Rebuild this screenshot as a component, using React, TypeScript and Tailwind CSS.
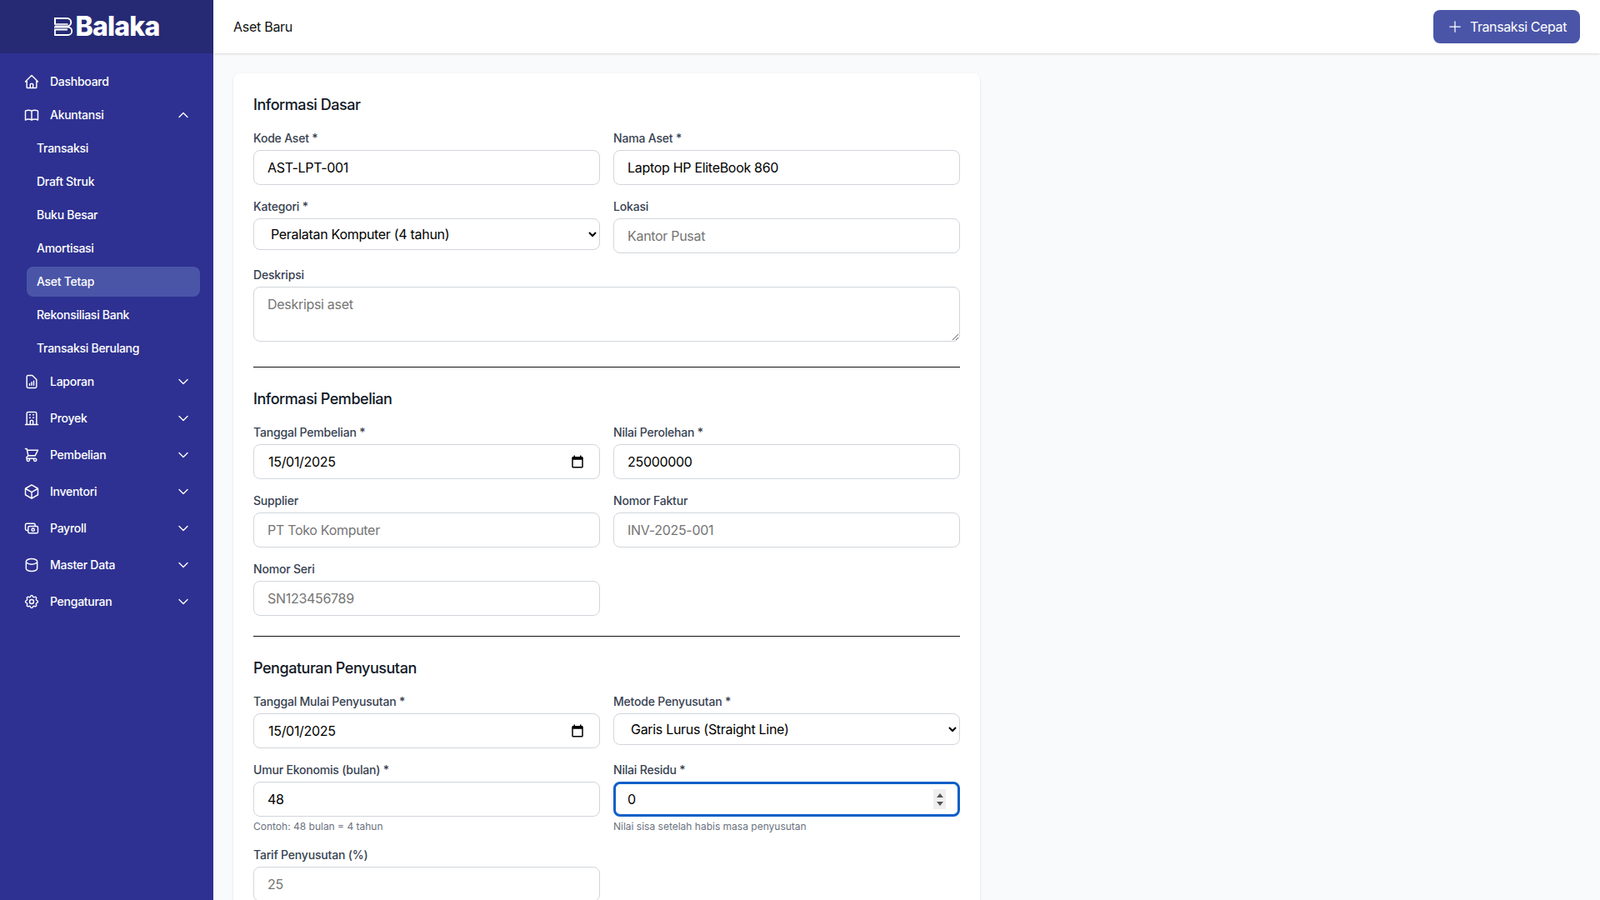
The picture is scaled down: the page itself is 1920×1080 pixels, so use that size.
import React from "react";
import { HiOutlineCube, HiOutlineChevronDown, HiOutlineChevronUp, HiOutlinePlus } from "react-icons/hi2";

type IconProps = { className?: string; strokeWidth?: number };

function Stroke({ d, className }: { d: string; className?: string }) {
  return (
    <svg className={className} viewBox="0 0 24 24" fill="none" stroke="currentColor" strokeWidth="1.75" strokeLinecap="round" strokeLinejoin="round">
      <path d={d} />
    </svg>
  );
}

const HomeIcon = (p: IconProps) => (
  <Stroke className={p.className} d="M3 12l2-2m0 0l7-7 7 7M5 10v10a1 1 0 001 1h3m10-11l2 2m-2-2v10a1 1 0 01-1 1h-3m-6 0a1 1 0 001-1v-4a1 1 0 011-1h2a1 1 0 011 1v4a1 1 0 001 1m-6 0h6" />
);
const BookIcon = (p: IconProps) => (
  <Stroke className={p.className} d="M12 6.253v13m0-13C10.832 5.477 9.246 5 7.5 5S4.168 5.477 3 6.253v13C4.168 18.477 5.754 18 7.5 18s3.332.477 4.5 1.253m0-13C13.168 5.477 14.754 5 16.5 5c1.747 0 3.332.477 4.5 1.253v13C19.832 18.477 18.247 18 16.5 18c-1.746 0-3.332.477-4.5 1.253" />
);
const ReportIcon = (p: IconProps) => (
  <Stroke className={p.className} d="M9 17v-2m3 2v-4m3 4v-6m2 10H7a2 2 0 01-2-2V5a2 2 0 012-2h5.586a1 1 0 01.707.293l5.414 5.414a1 1 0 01.293.707V19a2 2 0 01-2 2z" />
);
const BuildingIcon = (p: IconProps) => (
  <Stroke className={p.className} d="M19 21V5a2 2 0 00-2-2H7a2 2 0 00-2 2v16m14 0h2m-2 0h-5m-9 0H3m2 0h5M9 7h1m-1 4h1m4-4h1m-1 4h1m-5 10v-5a1 1 0 011-1h2a1 1 0 011 1v5m-4 0h4" />
);
const CartIcon = (p: IconProps) => (
  <Stroke className={p.className} d="M3 3h2l.4 2M7 13h10l4-8H5.4M7 13L5.4 5M7 13l-2.293 2.293c-.63.63-.184 1.707.707 1.707H17m0 0a2 2 0 100 4 2 2 0 000-4zm-8 2a2 2 0 11-4 0 2 2 0 014 0z" />
);
const CashIcon = (p: IconProps) => (
  <Stroke className={p.className} d="M17 9V7a2 2 0 00-2-2H5a2 2 0 00-2 2v6a2 2 0 002 2h2m2 4h10a2 2 0 002-2v-6a2 2 0 00-2-2H9a2 2 0 00-2 2v6a2 2 0 002 2zm7-5a2 2 0 11-4 0 2 2 0 014 0z" />
);
const CylinderIcon = (p: IconProps) => (
  <Stroke className={p.className} d="M4 7v10c0 2.21 3.582 4 8 4s8-1.79 8-4V7M4 7c0 2.21 3.582 4 8 4s8-1.79 8-4M4 7c0-2.21 3.582-4 8-4s8 1.79 8 4" />
);
const CogIcon = (p: IconProps) => (
  <Stroke className={p.className} d="M10.325 4.317c.426-1.756 2.924-1.756 3.35 0a1.724 1.724 0 002.573 1.066c1.543-.94 3.31.826 2.37 2.37a1.724 1.724 0 001.065 2.572c1.756.426 1.756 2.924 0 3.35a1.724 1.724 0 00-1.066 2.573c.94 1.543-.826 3.31-2.37 2.37a1.724 1.724 0 00-2.572 1.065c-.426 1.756-2.924 1.756-3.35 0a1.724 1.724 0 00-2.573-1.066c-1.543.94-3.31-.826-2.37-2.37a1.724 1.724 0 00-1.065-2.572c-1.756-.426-1.756-2.924 0-3.35a1.724 1.724 0 001.066-2.573c-.94-1.543.826-3.31 2.37-2.37.996.608 2.296.07 2.572-1.065zM15 12a3 3 0 11-6 0 3 3 0 016 0z" />
);
const CubeIcon = (p: IconProps) => <HiOutlineCube className={p.className} strokeWidth={1.75} />;

function Logo() {
  return (
    <svg className="w-[22px] h-[22px]" viewBox="0 0 22 22" fill="none" stroke="white" strokeWidth="2">
      <path d="M0 1h15.5a4.5 4.5 0 0 1 0 9.5H1" />
      <path d="M0 8h16.5" strokeWidth="1.6" />
      <path d="M0 11.5h16.5a4.7 4.7 0 0 1 0 9.5H1V14.5h15" strokeWidth="1.8" />
      <path d="M1 1v7" />
    </svg>
  );
}

function TopItem({ icon: Icon, label, open }: { icon: React.ComponentType<IconProps>; label: string; open?: boolean }) {
  return (
    <div className="flex items-center h-9 px-3 gap-3 text-sm font-medium tracking-[-0.27px] text-white">
      <Icon className="w-5 h-5 shrink-0" />
      <span className="flex-1">{label}</span>
      {open === undefined ? null : open ? (
        <HiOutlineChevronUp className="w-4 h-4" strokeWidth={2} />
      ) : (
        <HiOutlineChevronDown className="w-4 h-4" strokeWidth={2} />
      )}
    </div>
  );
}

function SubItem({ label, active }: { label: string; active?: boolean }) {
  return (
    <div className={`flex items-center h-9 ml-4 px-3 rounded-lg text-sm font-medium tracking-[-0.27px] text-white ${active ? "bg-[#4a55a8]" : ""}`}>
      {label}
    </div>
  );
}

function Sidebar() {
  const subs = ["Transaksi", "Draft Struk", "Buku Besar", "Amortisasi", "Aset Tetap", "Rekonsiliasi Bank", "Transaksi Berulang"];
  const groups: [React.ComponentType<IconProps>, string][] = [
    [ReportIcon, "Laporan"],
    [BuildingIcon, "Proyek"],
    [CartIcon, "Pembelian"],
    [CubeIcon, "Inventori"],
    [CashIcon, "Payroll"],
    [CylinderIcon, "Master Data"],
    [CogIcon, "Pengaturan"],
  ];
  return (
    <aside className="w-64 shrink-0 h-full bg-[#2e3191] flex flex-col">
      <div className="h-16 shrink-0 bg-[#262a75] flex items-center justify-center gap-1">
        <Logo />
        <span className="text-[32px] leading-none font-extrabold text-white tracking-[-0.8px]">Balaka</span>
      </div>
      <nav className="flex flex-col gap-1 px-4 pt-4">
        <TopItem icon={HomeIcon} label="Dashboard" />
        <TopItem icon={BookIcon} label="Akuntansi" open />
        {subs.map((s) => (
          <SubItem key={s} label={s} active={s === "Aset Tetap"} />
        ))}
        <div className="flex flex-col gap-2">
          {groups.map(([icon, label]) => (
            <TopItem key={label} icon={icon} label={label} open={false} />
          ))}
        </div>
      </nav>
    </aside>
  );
}

const inputCls =
  "block w-full h-[42px] px-4 py-2 text-base tracking-[-0.3px] text-black bg-white border border-[#d1d5db] rounded-lg placeholder:text-[#757575] outline-none";

function Label({ children }: { children: React.ReactNode }) {
  return <label className="block mb-1 text-sm font-medium tracking-[-0.19px] text-[#374151]">{children}</label>;
}

function Field({ label, value, placeholder }: { label: string; value?: string; placeholder?: string }) {
  return (
    <div>
      <Label>{label}</Label>
      <input type="text" className={inputCls} defaultValue={value} placeholder={placeholder} />
    </div>
  );
}

function CalendarIcon() {
  return (
    <svg className="w-[18px] h-[18px] text-black" viewBox="0 0 24 24" fill="currentColor">
      <path d="M19 4h-1V2h-2v2H8V2H6v2H5c-1.1 0-2 .9-2 2v14c0 1.1.9 2 2 2h14c1.1 0 2-.9 2-2V6c0-1.1-.9-2-2-2zm0 16H5V9h14v11z" />
    </svg>
  );
}

function DateField({ label, value }: { label: string; value: string }) {
  return (
    <div>
      <Label>{label}</Label>
      <div className="relative">
        <input type="text" className={`${inputCls} pl-[17px]`} defaultValue={value} />
        <span className="absolute right-[18px] top-3">
          <CalendarIcon />
        </span>
      </div>
    </div>
  );
}

function SelectField({ label, value }: { label: string; value: string }) {
  return (
    <div>
      <Label>{label}</Label>
      <select className="block w-full h-[38px] px-4 text-base tracking-[-0.3px] text-black bg-white border border-[#d1d5db] rounded-lg outline-none" defaultValue={value}>
        <option>{value}</option>
      </select>
    </div>
  );
}

function SectionTitle({ children }: { children: React.ReactNode }) {
  return <h2 className="mb-4 text-lg font-medium tracking-[-0.46px] text-[#111827]">{children}</h2>;
}

export default function App() {
  return (
    <div className="flex w-full h-screen overflow-hidden bg-[#f9fafb] font-['Inter',sans-serif]">
      <Sidebar />
      <div className="flex-1 min-w-0 flex flex-col h-full">
        <header className="h-16 shrink-0 bg-white shadow-sm flex items-center justify-between pl-6 pr-6 z-10">
          <span className="text-base tracking-[-0.27px] text-[#111111]">Aset Baru</span>
          <button className="h-10 px-4 rounded-lg bg-[#4a55a8] text-white text-base tracking-[-0.4px] flex items-center gap-2">
            <HiOutlinePlus className="w-5 h-5" />
            Transaksi Cepat
          </button>
        </header>
        <main className="flex-1 overflow-hidden p-6">
          <form className="w-[896px] bg-white rounded-lg shadow-sm p-6 text-[#111111]">
            <SectionTitle>Informasi Dasar</SectionTitle>
            <div className="grid grid-cols-2 gap-4">
              <Field label="Kode Aset *" value="AST-LPT-001" />
              <Field label="Nama Aset *" value="Laptop HP EliteBook 860" />
              <SelectField label="Kategori *" value="Peralatan Komputer (4 tahun)" />
              <Field label="Lokasi" placeholder="Kantor Pusat" />
              <div className="col-span-2">
                <Label>Deskripsi</Label>
                <textarea rows={2} placeholder="Deskripsi aset" className="block w-full mb-1.5 px-4 py-2 text-base tracking-[-0.3px] text-black bg-white border border-[#d1d5db] rounded-lg placeholder:text-[#757575] outline-none" />
              </div>
            </div>
            <hr className="my-6" />
            <SectionTitle>Informasi Pembelian</SectionTitle>
            <div className="grid grid-cols-2 gap-4">
              <DateField label="Tanggal Pembelian *" value="15/01/2025" />
              <Field label="Nilai Perolehan *" value="25000000" />
              <Field label="Supplier" placeholder="PT Toko Komputer" />
              <Field label="Nomor Faktur" placeholder="INV-2025-001" />
              <Field label="Nomor Seri" placeholder="SN123456789" />
            </div>
            <hr className="my-6" />
            <SectionTitle>Pengaturan Penyusutan</SectionTitle>
            <div className="grid grid-cols-2 gap-4">
              <DateField label="Tanggal Mulai Penyusutan *" value="15/01/2025" />
              <SelectField label="Metode Penyusutan *" value="Garis Lurus (Straight Line)" />
              <div>
                <Label>Umur Ekonomis (bulan) *</Label>
                <input type="text" className={inputCls} defaultValue="48" />
                <p className="mt-1 text-xs text-[#6b7280]">Contoh: 48 bulan = 4 tahun</p>
              </div>
              <div>
                <Label>Nilai Residu *</Label>
                <div className="relative">
                  <input type="text" defaultValue="0" className="block w-full h-[42px] pl-[14px] pr-4 py-2 text-base text-black bg-white rounded-lg border-[3px] border-[#0b5fc7] outline-none" />
                  <span className="absolute right-[17px] top-[9px] w-[15px] h-6 bg-[#efefef] flex flex-col items-center justify-center gap-[5px]">
                    <span className="w-0 h-0 border-x-[4px] border-x-transparent border-b-[5px] border-b-[#555555]" />
                    <span className="w-0 h-0 border-x-[4px] border-x-transparent border-t-[5px] border-t-[#555555]" />
                  </span>
                </div>
                <p className="mt-1 text-xs text-[#6b7280]">Nilai sisa setelah habis masa penyusutan</p>
              </div>
              <Field label="Tarif Penyusutan (%)" placeholder="25" />
            </div>
          </form>
        </main>
      </div>
    </div>
  );
}
